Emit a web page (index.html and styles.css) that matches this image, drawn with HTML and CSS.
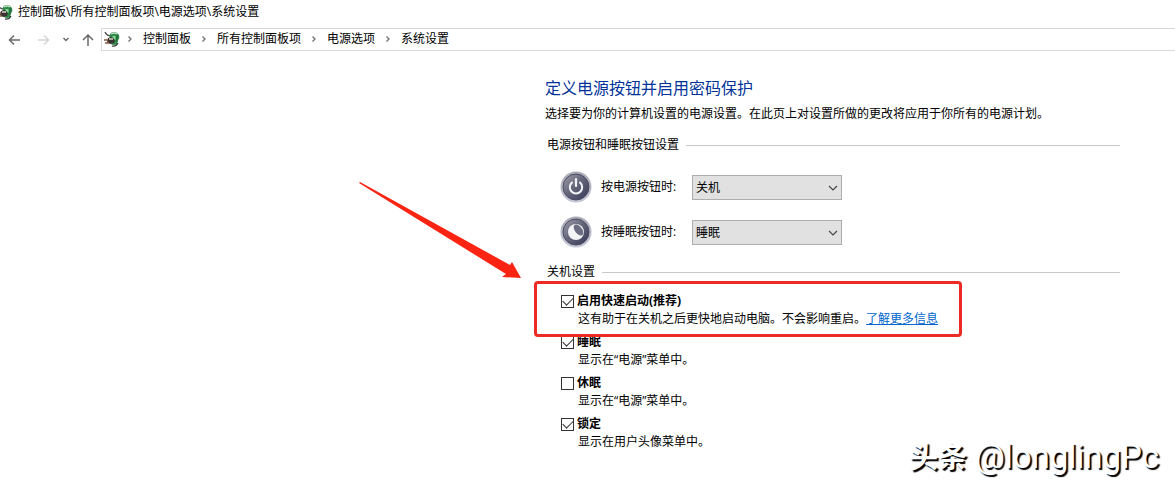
FILE: index.html
```html
<!DOCTYPE html>
<html lang="zh-CN">
    <head>
        <meta charset="utf-8">
        <title>系统设置</title>
        <link rel="stylesheet" href="styles.css">
    </head>
    <body>
        <!-- Shared symbols -->
        <svg class="symbols" width="0" height="0" aria-hidden="true">
            <symbol id="power-options" viewBox="0 0 16 16">
                <path d="M6 3Q7 1 10 1Q13 1 14 3L15 4Q16 8 14 9L13 13Q10 15 7 13L5 9Z" fill="#2f8a4a" />
                <path d="M7 3Q10 1 13 3" fill="none" stroke="#c4dccb" stroke-width="1.5" />
                <path d="M10 5V9" stroke="#7fd892" stroke-width="3" />
                <path d="M13 4V11" stroke="#1d5c31" />
                <path d="M1 1Q2 4 6 5" fill="none" stroke="#4b4f4c" stroke-width="1.2" />
                <path d="M4 7L8 6L11 9L10 12L6 13L3 11Z" fill="#3a3331" />
                <path d="M5 8L9 8" stroke="#d8cfc8" stroke-width="1.5" />
                <path d="M0 9H4M1 12H5" stroke="#8a5a3c" stroke-width="1.5" />
                <path d="M8 15Q12 16 14 12" fill="none" stroke="#343936" stroke-width="1.2" />
            </symbol>
            <symbol id="crumb-arrow" viewBox="0 0 6 8">
                <path d="M1.5 1.5L4 4L1.5 6.5" fill="none" stroke="#707070" stroke-width="1.3" />
            </symbol>
            <symbol id="select-arrow" viewBox="0 0 10 6">
                <path d="M1 1L5 5L9 1" fill="none" stroke="#444" stroke-width="1.1" />
            </symbol>
            <linearGradient id="orb" x1="0" y1="0" x2="1" y2="1">
                <stop offset="0" stop-color="#a0a1ae" />
                <stop offset="0.45" stop-color="#67677b" />
                <stop offset="1" stop-color="#363858" />
            </linearGradient>
            <linearGradient id="ring" x1="0" y1="0" x2="0" y2="1">
                <stop offset="0" stop-color="#a9aab4" />
                <stop offset="1" stop-color="#c6c7d8" />
            </linearGradient>
        </svg>

        <header>
            <div class="title-bar">
                <svg class="title-icon"><use href="#power-options" /></svg>
                <span>控制面板\所有控制面板项\电源选项\系统设置</span>
            </div>
            <div class="nav-bar">
                <div class="nav-buttons">
                    <button aria-label="后退">
                        <svg width="12" height="12" viewBox="0 0 12 12"><path d="M6 1.5L1.5 6L6 10.5M1.5 6H12" /></svg>
                    </button>
                    <button aria-label="前进" disabled>
                        <svg width="12" height="12" viewBox="0 0 12 12"><path d="M6 1.5L10.5 6L6 10.5M10.5 6H0" /></svg>
                    </button>
                    <button aria-label="最近浏览的位置">
                        <svg width="8" height="5" viewBox="0 0 8 5"><path d="M1.5 1L4 3.5L6.5 1" /></svg>
                    </button>
                    <button aria-label="上移">
                        <svg width="12" height="12" viewBox="0 0 12 12"><path d="M1 6L6 1L11 6M6 1V12" /></svg>
                    </button>
                </div>
                <nav class="address">
                    <svg class="address-icon"><use href="#power-options" /></svg>
                    <svg class="crumb-arrow"><use href="#crumb-arrow" /></svg>
                    <a href="#">控制面板</a>
                    <svg class="crumb-arrow"><use href="#crumb-arrow" /></svg>
                    <a href="#">所有控制面板项</a>
                    <svg class="crumb-arrow"><use href="#crumb-arrow" /></svg>
                    <a href="#">电源选项</a>
                    <svg class="crumb-arrow"><use href="#crumb-arrow" /></svg>
                    <a href="#">系统设置</a>
                </nav>
            </div>
        </header>

        <main>
            <h1>定义电源按钮并启用密码保护</h1>
            <p class="intro">选择要为你的计算机设置的电源设置。在此页上对设置所做的更改将应用于你所有的电源计划。</p>

            <h2>电源按钮和睡眠按钮设置</h2>
            <div class="fields">
                <div class="field">
                    <svg class="orb" viewBox="0 0 32 32">
                        <circle cx="16" cy="16" r="15.5" fill="url(#ring)" />
                        <circle cx="16" cy="16" r="13" fill="url(#orb)" stroke="#4a4b62" />
                        <path d="M12 11.5A6.200 6.200 0 1 0 20 11.5" fill="none" stroke="#f4f4f8" stroke-width="2" stroke-linecap="round" />
                        <path d="M16 8V15" stroke="#f4f4f8" stroke-width="2.200" stroke-linecap="round" />
                    </svg>
                    <label for="power-button">按电源按钮时:</label>
                    <div class="select">
                        <select id="power-button">
                            <option>关机</option>
                            <option>睡眠</option>
                        </select>
                        <svg><use href="#select-arrow" /></svg>
                    </div>
                </div>
                <div class="field">
                    <svg class="orb" viewBox="0 0 32 32">
                        <circle cx="16" cy="16" r="15.5" fill="url(#ring)" />
                        <circle cx="16" cy="16" r="13" fill="url(#orb)" stroke="#4a4b62" />
                        <circle cx="16" cy="16" r="8" fill="#f4f4f8" />
                        <ellipse cx="18.500" cy="14" rx="3.500" ry="6.500" transform="rotate(-38 18.500 14)" fill="#6c6d82" />
                    </svg>
                    <label for="sleep-button">按睡眠按钮时:</label>
                    <div class="select">
                        <select id="sleep-button">
                            <option>睡眠</option>
                            <option>关机</option>
                        </select>
                        <svg><use href="#select-arrow" /></svg>
                    </div>
                </div>
            </div>

            <h2>关机设置</h2>
            <div class="options">
                <div class="option">
                    <label><input type="checkbox" checked>启用快速启动(推荐)</label>
                    <p>这有助于在关机之后更快地启动电脑。不会影响重启。<a href="#">了解更多信息</a></p>
                    <div class="highlight"></div>
                    <svg class="pointer" viewBox="0 0 166 102">
                        <path d="M1 3L2 2L152 85L154 82L163 98L144 97L148 94Z" />
                    </svg>
                </div>
                <div class="option">
                    <label><input type="checkbox" checked>睡眠</label>
                    <p>显示在“电源”菜单中。</p>
                </div>
                <div class="option">
                    <label><input type="checkbox">休眠</label>
                    <p>显示在“电源”菜单中。</p>
                </div>
                <div class="option">
                    <label><input type="checkbox" checked>锁定</label>
                    <p>显示在用户头像菜单中。</p>
                </div>
            </div>
        </main>

        <div class="watermark"><b>头条</b> @longlingPc</div>
    </body>
</html>
```
FILE: styles.css
```css
* {
    box-sizing: border-box;
}

body {
    position: relative;
    margin: 0;
    min-height: 100vh;
    background: #fff;
    color: #000;
    font-family: 'Open Sans', 'Noto Sans CJK SC', sans-serif;
    font-size: 12px;
    line-height: 18px;
    overflow-x: hidden;
}

h1, h2, p {
    margin: 0;
    font-weight: normal;
}

.symbols {
    position: absolute;
}

/* Title and address bar */
.title-bar {
    display: flex;
    align-items: center;
    gap: 5px;
    height: 28px;
    padding-bottom: 5px;
}

.title-icon {
    width: 16px;
    height: 16px;
    margin-left: -3px;
}

.nav-bar {
    display: flex;
    height: 23px;
}

.nav-buttons {
    display: flex;
    align-items: center;
    gap: 12px;
    width: 101px;
    padding-left: 8px;
}

.nav-buttons button {
    display: flex;
    padding: 0;
    border: none;
    background: none;
}

.nav-buttons button:first-child {
    margin-right: 6px;
}

.nav-buttons path {
    fill: none;
    stroke: #6a6a6a;
    stroke-width: 1.5;
}

.nav-buttons button:disabled path {
    stroke: #d5d5d5;
}

.address {
    display: flex;
    flex: 1;
    align-items: center;
    gap: 10px;
    padding-left: 2px;
    padding-bottom: 1px;
    border: 1px solid #d9d9d9;
    border-right: none;
}

.address a {
    color: #000;
    text-decoration: none;
}

.address-icon {
    width: 16px;
    height: 16px;
    margin-right: -3px;
}

.crumb-arrow {
    width: 6px;
    height: 8px;
}

/* Settings page */
main {
    padding: 25px 55px 32px 545px;
}

h1 {
    color: #003399;
    font-size: 16px;
    line-height: 24px;
}

.intro {
    margin: 5px 0 13px;
    white-space: nowrap;
}

h2 {
    display: flex;
    align-items: center;
    gap: 7px;
    padding-left: 2px;
    font-size: 12px;
}

h2::after {
    content: "";
    flex: 1;
    height: 1px;
    background: #c8c8c8;
}

.fields {
    display: grid;
    gap: 13px;
    padding: 17px 0 15px 15px;
}

.field {
    display: grid;
    grid-template-columns: 32px 82px 150px;
    gap: 9px;
    align-items: center;
}

.orb {
    width: 32px;
    height: 32px;
}

.select {
    position: relative;
}

.select select {
    display: block;
    width: 100%;
    height: 25px;
    padding: 1px 3px 0;
    appearance: none;
    border: 1px solid #adadad;
    border-radius: 0;
    background: #e1e1e1;
    color: #000;
    font: inherit;
}

.select svg {
    position: absolute;
    top: 10px;
    right: 4px;
    width: 10px;
    height: 6px;
    pointer-events: none;
}

.options {
    display: grid;
    gap: 4px;
    padding: 10px 0 0 16px;
}

.option {
    position: relative;
}

.option label {
    display: flex;
    align-items: flex-end;
    gap: 3px;
    font-weight: bold;
    line-height: 19px;
}

.option p {
    padding-left: 17px;
    white-space: nowrap;
}

.option a {
    color: #0066cc;
}

.option input {
    display: grid;
    place-items: center;
    width: 13px;
    height: 13px;
    margin: 0 0 2px;
    appearance: none;
    border: 1px solid #333;
    background: #fff;
}

.option input:checked::after {
    content: "";
    width: 9px;
    height: 5px;
    border: solid #333;
    border-width: 0 0 1px 1px;
    transform: translateY(-2px) rotate(-45deg);
}

/* Annotations drawn over the page */
.highlight {
    position: absolute;
    z-index: 1;
    top: -10px;
    left: -27px;
    width: 428px;
    height: 56px;
    border: 3px solid #ed2a24;
    border-radius: 4px;
    pointer-events: none;
}

.pointer {
    position: absolute;
    top: -111px;
    left: -203px;
    width: 166px;
    height: 102px;
    fill: #fb2412;
    pointer-events: none;
}

.watermark {
    position: absolute;
    right: 16px;
    bottom: 10px;
    color: #fff;
    font-family: Roboto, 'Noto Sans CJK SC', sans-serif;
    font-size: 33px;
    line-height: 40px;
    text-shadow: 2px 2px 1px #000;
}

.watermark b {
    font-size: 29px;
}
```
